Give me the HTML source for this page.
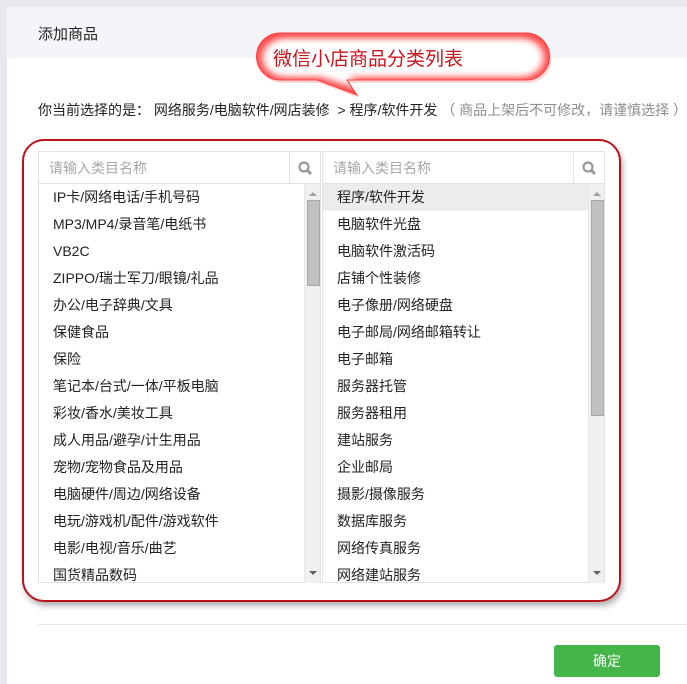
<!DOCTYPE html>
<html><head><meta charset="utf-8"><style>
*{margin:0;padding:0;box-sizing:border-box}
body{width:687px;height:684px;background:#e7e8eb;position:relative;overflow:hidden;font-family:"Liberation Sans","Microsoft YaHei","Noto Sans CJK SC",sans-serif;font-size:14px;color:#222}
.panel{position:absolute;left:7px;top:7px;width:680px;height:677px;background:#fff}
.head{position:absolute;left:0;top:0;width:680px;height:51px;background:#f4f5f9}
.title{position:absolute;left:31px;top:16px;font-size:15px;color:#222}
.sel{position:absolute;left:31px;top:93px;font-size:14px;color:#222;white-space:nowrap}
.sel .g{color:#8d8d8d}
.ctext{position:absolute;left:273px;top:44px;font-size:19px;color:#c8141c;white-space:nowrap}
.redbox{position:absolute;left:22px;top:139px;width:599px;height:463px;border:2px solid #b8121b;border-radius:22px;box-shadow:2px 4px 6px rgba(0,0,0,.3)}
.col{position:absolute;top:151px;width:283px;height:432px;border:1px solid #e3e3e3;background:#fff}
.srch{height:32px;border-bottom:1px solid #e3e3e3;position:relative}
.srch span{position:absolute;left:10px;top:6px;color:#a8a8a8;font-size:14px}
.srch .ic{position:absolute;right:0;top:0;width:31px;height:31px;border-left:1px solid #e3e3e3}
.list{position:absolute;top:32px;left:0;width:266px;height:399px;overflow:hidden}
.list div{height:27px;line-height:27px;padding-left:14px;font-size:14px;white-space:nowrap}
.list div.on{background:#ececec}
.sb{position:absolute;right:0;top:32px;width:16px;height:399px;background:#f0f0f0;border-left:1px solid #e8e8e8}
.sb .t{position:absolute;left:2px;width:13px;top:16px;background:#c1c1c1;border:1px solid #a9a9a9}
.sb .up,.sb .dn{position:absolute;left:4px;width:0;height:0;border-left:4px solid transparent;border-right:4px solid transparent}
.sb .up{top:8px;border-bottom:4px solid #a0a0a0}
.sb .dn{bottom:8px;border-top:4px solid #606060}
.hr{position:absolute;left:31px;top:617px;width:649px;height:1px;background:#e4e5e9}
.btn{position:absolute;left:547px;top:638px;width:106px;height:32px;background:#44b549;border-radius:3px;color:#fff;font-size:14px;text-align:center;line-height:32px}
</style></head><body>
<div class="panel">
<div class="head"><div class="title">添加商品</div></div>
<div class="sel">你当前选择的是： 网络服务/电脑软件/网店装修 &nbsp;&gt; 程序/软件开发 <span class="g">（ 商品上架后不可修改，请谨慎选择 ）</span></div>
<div class="hr"></div>
<div class="btn">确定</div>
</div>
<svg style="position:absolute;left:250px;top:25px" width="310" height="80">
<defs><filter id="b" x="-10%" y="-20%" width="120%" height="140%"><feGaussianBlur stdDeviation="4"/></filter>
<clipPath id="c"><path id="p" d="M30 8 H276 A23 23 0 0 1 276 55 H97 L107 70 L67 55 H30 A23 23 0 0 1 30 8 Z"/></clipPath></defs>
<g transform="translate(0,0)">
<path d="M30 8 H276 A23 23 0 0 1 276 55 H97 L107 70 L67 55 H30 A23 23 0 0 1 30 8 Z" fill="#ff5a5a" transform="translate(2,3)" opacity="0.25"/>
<g clip-path="url(#c)">
<rect x="0" y="0" width="310" height="80" fill="#ff4a4a"/>
<path d="M30 8 H276 A23 23 0 0 1 276 55 H97 L107 70 L67 55 H30 A23 23 0 0 1 30 8 Z" fill="#fff" filter="url(#b)" transform="translate(155,38) scale(0.96,0.82) translate(-155,-38)"/>
</g>
<path d="M30 8 H276 A23 23 0 0 1 276 55 H97 L107 70 L67 55 H30 A23 23 0 0 1 30 8 Z" fill="none" stroke="#ff4040" stroke-width="1"/>
</g>
</svg>
<div class="ctext">微信小店商品分类列表</div>
<div class="redbox"></div>
<div class="col" style="left:38px">
<div class="srch"><span>请输入类目名称</span><div class="ic"><svg width="31" height="31"><circle cx="14" cy="15" r="4.5" fill="none" stroke="#9a9a9a" stroke-width="2.2"/><path d="M17 18 L21 22" stroke="#9a9a9a" stroke-width="3"/></svg></div></div>
<div class="list">
<div>IP卡/网络电话/手机号码</div><div>MP3/MP4/录音笔/电纸书</div><div>VB2C</div><div>ZIPPO/瑞士军刀/眼镜/礼品</div><div>办公/电子辞典/文具</div><div>保健食品</div><div>保险</div><div>笔记本/台式/一体/平板电脑</div><div>彩妆/香水/美妆工具</div><div>成人用品/避孕/计生用品</div><div>宠物/宠物食品及用品</div><div>电脑硬件/周边/网络设备</div><div>电玩/游戏机/配件/游戏软件</div><div>电影/电视/音乐/曲艺</div><div>国货精品数码</div>
</div>
<div class="sb"><div class="up"></div><div class="t" style="height:86px"></div><div class="dn"></div></div>
</div>
<div class="col" style="left:322px">
<div class="srch"><span>请输入类目名称</span><div class="ic"><svg width="31" height="31"><circle cx="14" cy="15" r="4.5" fill="none" stroke="#9a9a9a" stroke-width="2.2"/><path d="M17 18 L21 22" stroke="#9a9a9a" stroke-width="3"/></svg></div></div>
<div class="list">
<div class="on">程序/软件开发</div><div>电脑软件光盘</div><div>电脑软件激活码</div><div>店铺个性装修</div><div>电子像册/网络硬盘</div><div>电子邮局/网络邮箱转让</div><div>电子邮箱</div><div>服务器托管</div><div>服务器租用</div><div>建站服务</div><div>企业邮局</div><div>摄影/摄像服务</div><div>数据库服务</div><div>网络传真服务</div><div>网络建站服务</div>
</div>
<div class="sb"><div class="up"></div><div class="t" style="height:216px"></div><div class="dn"></div></div>
</div>
</body></html>
